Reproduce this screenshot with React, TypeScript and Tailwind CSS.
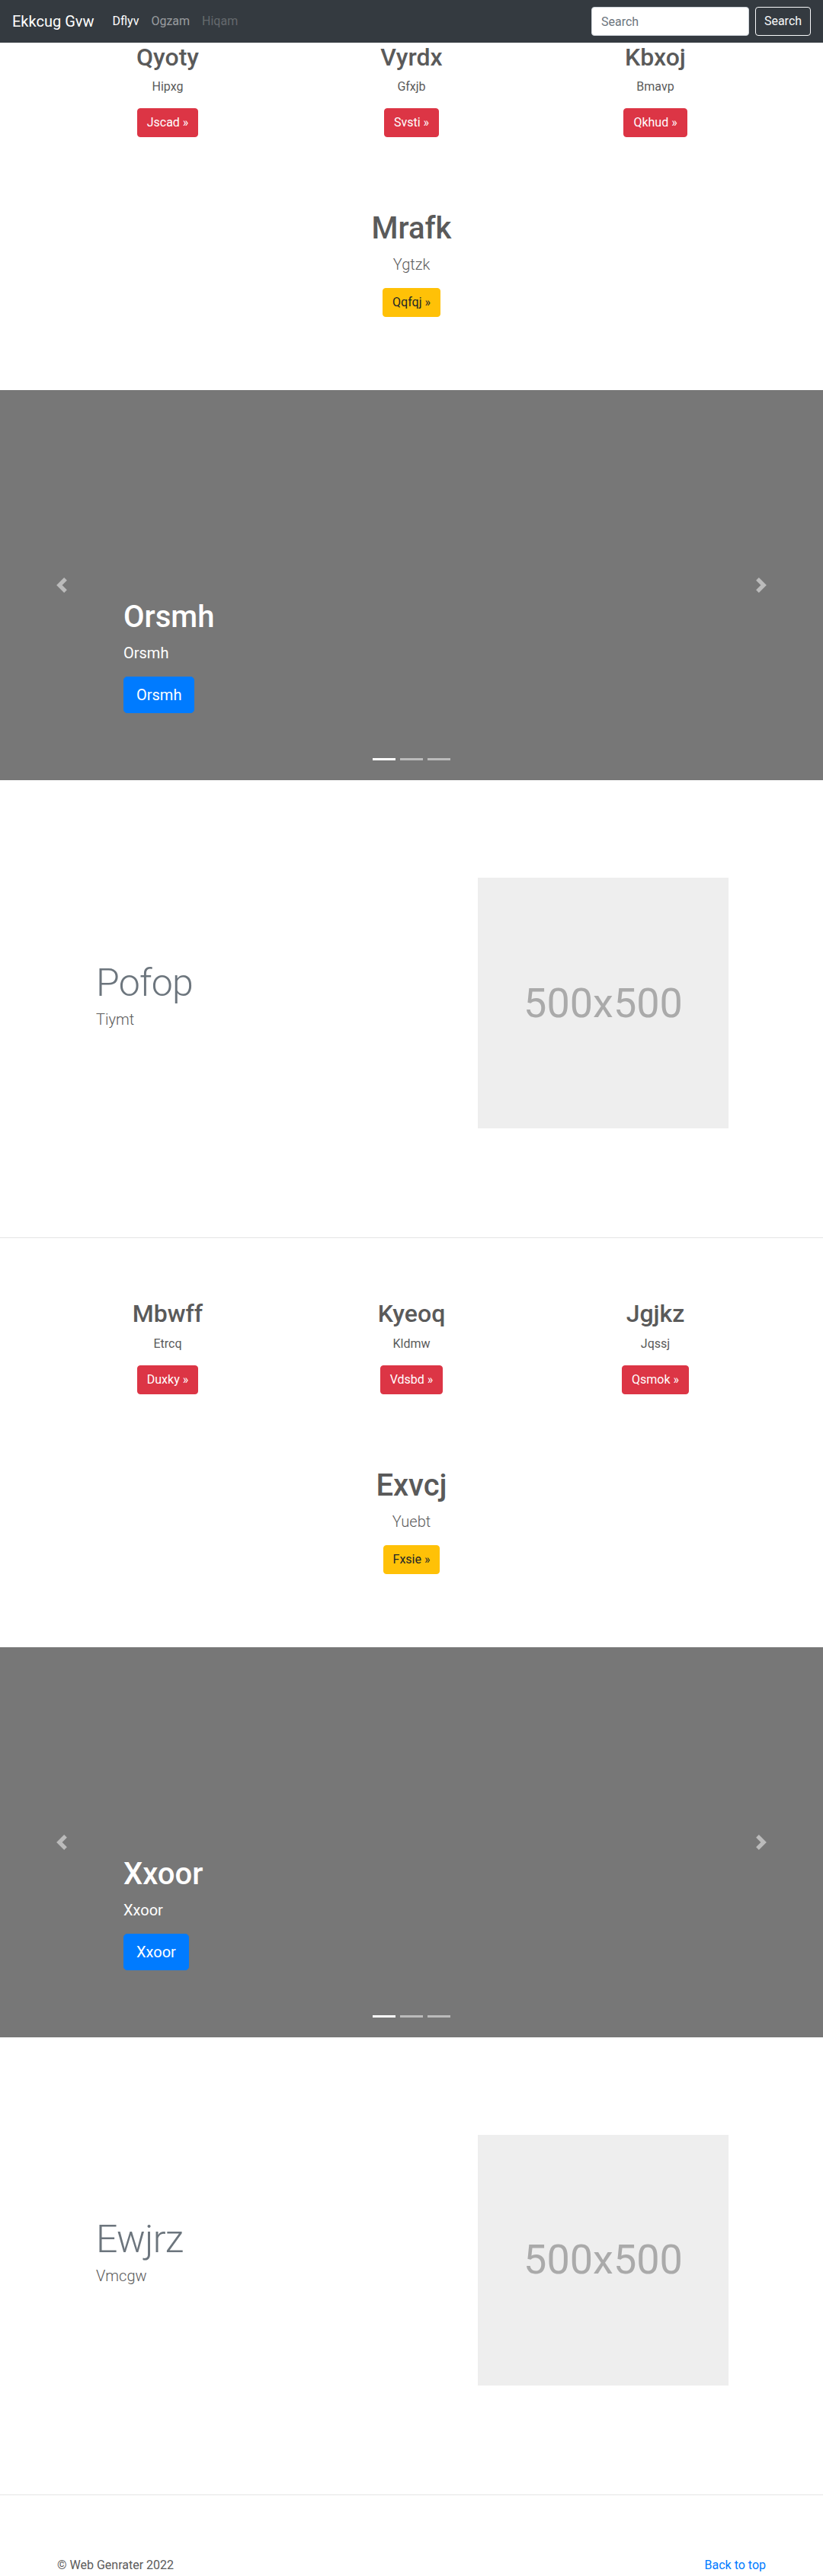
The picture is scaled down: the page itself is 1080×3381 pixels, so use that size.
import type { ReactNode } from "react"

type Col = { title: string; text: string; cta: string }

const rowOne: Col[] = [
  { title: "Qyoty", text: "Hipxg", cta: "Jscad" },
  { title: "Vyrdx", text: "Gfxjb", cta: "Svsti" },
  { title: "Kbxoj", text: "Bmavp", cta: "Qkhud" },
]

const rowTwo: Col[] = [
  { title: "Mbwff", text: "Etrcq", cta: "Duxky" },
  { title: "Kyeoq", text: "Kldmw", cta: "Vdsbd" },
  { title: "Jgjkz", text: "Jqssj", cta: "Qsmok" },
]

function Btn({ className, children }: { className: string; children: ReactNode }) {
  return (
    <a
      href="#"
      className={`inline-block rounded border px-3 py-1.5 text-base leading-6 ${className}`}
    >
      {children}
    </a>
  )
}

function Columns({ items }: { items: Col[] }) {
  return (
    <div className="mx-auto flex w-[960px]">
      {items.map((item) => (
        <div key={item.title} className="w-[320px] px-[15px] text-center">
          <h2 className="mb-2 text-[32px] leading-[1.2] font-medium">{item.title}</h2>
          <p className="mx-3 mb-4 text-base leading-6">{item.text}</p>
          <p className="mb-4">
            <Btn className="border-[#dc3545] bg-[#dc3545] text-white">{item.cta} »</Btn>
          </p>
        </div>
      ))}
    </div>
  )
}

function Highlight({ title, text, cta }: Col) {
  return (
    <div className="py-20 text-center">
      <h1 className="mb-2 text-[40px] leading-[1.2] font-medium">{title}</h1>
      <p className="mb-4 text-xl leading-[1.5] font-light">{text}</p>
      <p className="mb-4">
        <Btn className="border-[#ffc107] bg-[#ffc107] text-[#212529]">{cta} »</Btn>
      </p>
    </div>
  )
}

function Carousel({ label }: { label: string }) {
  return (
    <div className="relative h-[512px] bg-[#777]">
      {/* Controls */}
      <a
        href="#"
        aria-label="Previous"
        className="absolute inset-y-0 left-0 flex w-[15%] items-center justify-center opacity-50"
      >
        <svg width="20" height="20" viewBox="0 0 8 8" fill="#fff">
          <path d="M5.25 0l-4 4 4 4 1.5-1.5L4.25 4l2.5-2.5L5.25 0z" />
        </svg>
      </a>
      <a
        href="#"
        aria-label="Next"
        className="absolute inset-y-0 right-0 flex w-[15%] items-center justify-center opacity-50"
      >
        <svg width="20" height="20" viewBox="0 0 8 8" fill="#fff">
          <path d="M2.75 0l-1.5 1.5L3.75 4l-2.5 2.5L2.75 8l4-4-4-4z" />
        </svg>
      </a>

      {/* Caption */}
      <div className="absolute right-[15%] bottom-[52px] left-[15%] pt-5 pb-5 text-left text-white">
        <h1 className="mb-2 text-[40px] leading-[1.2] font-medium">{label}</h1>
        <p className="mb-4 text-xl leading-[1.5]">{label}</p>
        <p className="mb-4">
          <a
            href="#"
            className="inline-block rounded-[0.3rem] border border-[#007bff] bg-[#007bff] px-4 py-2 text-xl leading-[1.5] text-white"
          >
            {label}
          </a>
        </p>
      </div>

      {/* Indicators */}
      <ol className="absolute inset-x-0 bottom-4 flex justify-center">
        <li className="mx-[3px] my-[10px] h-[3px] w-[30px] bg-white" />
        <li className="mx-[3px] my-[10px] h-[3px] w-[30px] bg-white opacity-50" />
        <li className="mx-[3px] my-[10px] h-[3px] w-[30px] bg-white opacity-50" />
      </ol>
    </div>
  )
}

function Featurette({ title, text }: { title: string; text: string }) {
  return (
    <div className="flex items-center pt-[128px] pb-[63px]">
      <div className="w-[627px] pl-[126px]">
        <h2 className="mb-2 text-[50px] leading-none font-light tracking-[-0.05rem] text-[#6c757d]">
          {title}
        </h2>
        <p className="mb-4 text-xl leading-[1.5] font-light">{text}</p>
      </div>
      <div className="flex h-[329px] w-[329px] items-center justify-center bg-[#eee] text-[54px] leading-none text-[#aaa]">
        500x500
      </div>
    </div>
  )
}

export default function App() {
  return (
    <div className="bg-white font-[family-name:'Segoe_UI',Roboto,'Helvetica_Neue',Arial,sans-serif] text-[#5a5a5a]">
      {/* Navbar */}
      <nav className="flex h-14 items-center bg-[#343a40] px-4">
        <a href="#" className="mr-4 text-xl leading-[30px] text-white">
          Ekkcug Gvw
        </a>
        <ul className="flex text-base leading-6">
          <li>
            <a href="#" className="px-2 text-white">
              Dflyv
            </a>
          </li>
          <li>
            <a href="#" className="px-2 text-white/50">
              Ogzam
            </a>
          </li>
          <li>
            <a href="#" className="px-2 text-white/25">
              Hiqam
            </a>
          </li>
        </ul>
        <form className="ml-auto flex">
          <input
            type="text"
            placeholder="Search"
            className="mr-2 h-[38px] w-[207px] rounded border border-[#ced4da] bg-white px-3 text-base text-[#495057] placeholder:text-[#6c757d]"
          />
          <button
            type="button"
            className="h-[38px] w-[73px] rounded border border-[#f8f9fa] text-base text-[#f8f9fa]"
          >
            Search
          </button>
        </form>
      </nav>

      <Columns items={rowOne} />
      <Highlight title="Mrafk" text="Ygtzk" cta="Qqfqj" />
      <Carousel label="Orsmh" />
      <Featurette title="Pofop" text="Tiymt" />

      <hr className="my-20 border-t border-black/10" />

      <Columns items={rowTwo} />
      <Highlight title="Exvcj" text="Yuebt" cta="Fxsie" />
      <Carousel label="Xxoor" />
      <Featurette title="Ewjrz" text="Vmcgw" />

      <hr className="my-20 border-t border-black/10" />

      {/* Footer */}
      <footer className="mx-auto flex w-[960px] justify-between px-[15px] text-base leading-6">
        <p>© Web Genrater 2022</p>
        <a href="#" className="text-[#007bff]">
          Back to top
        </a>
      </footer>
    </div>
  )
}
